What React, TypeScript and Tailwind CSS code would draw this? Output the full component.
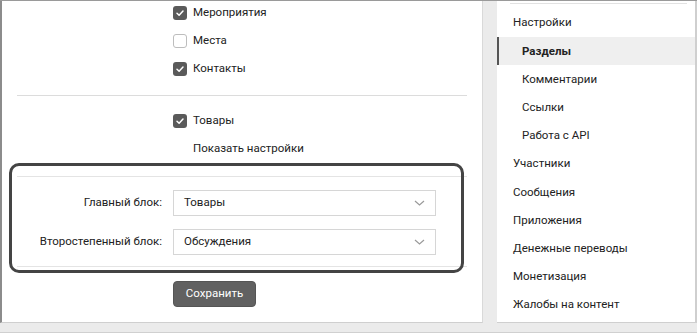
import React from "react";

function Check() {
  return (
    <svg width="10" height="10" viewBox="0 0 10 10" fill="none">
      <path d="M2 5.2L4.1 7.2L8 3" stroke="#fff" strokeWidth="1.5" strokeLinecap="round" strokeLinejoin="round" />
    </svg>
  );
}

function CheckRow({ label, checked }: { label: string; checked: boolean }) {
  return (
    <div className="h-[28px] flex items-center pl-[156px]">
      {checked ? (
        <span className="w-[14px] h-[14px] rounded-[3px] bg-[#5a5a5a] flex items-center justify-center">
          <Check />
        </span>
      ) : (
        <span className="w-[14px] h-[14px] rounded-[3px] border border-[#bdbdbd] bg-white" />
      )}
      <span className="ml-[6px] text-[11.5px] text-[#222]">{label}</span>
    </div>
  );
}

function Select({ value }: { value: string }) {
  return (
    <div className="w-[263px] h-[26px] border border-[#d6d6d6] bg-white flex items-center justify-between pl-[10px] pr-[10px]">
      <span className="text-[11.5px] text-[#222]">{value}</span>
      <svg width="11" height="6" viewBox="0 0 11 6" fill="none">
        <path d="M1 1L5.5 5L10 1" stroke="#9a9a9a" strokeWidth="1.2" />
      </svg>
    </div>
  );
}

const menu = [
  { label: "Настройки", sub: false },
  { label: "Разделы", sub: true, active: true },
  { label: "Комментарии", sub: true },
  { label: "Ссылки", sub: true },
  { label: "Работа с API", sub: true },
  { label: "Участники", sub: false },
  { label: "Сообщения", sub: false },
  { label: "Приложения", sub: false },
  { label: "Денежные переводы", sub: false },
  { label: "Монетизация", sub: false },
  { label: "Жалобы на контент", sub: false },
];

export default function App() {
  return (
    <div className="w-[697px] h-[333px] bg-[#ebebeb] flex flex-col overflow-hidden font-['Roboto',sans-serif] border-t border-[#9a9a9a]">
      <div className="flex h-[323px]">
        {/* left form */}
        <div className="w-[483px] bg-white border-l-2 border-[#8c8c8c] border-r border-r-[#d9d9d9] border-b border-b-[#cfcfcf] px-[15px]">
          <div className="-mt-[2px]">
            <CheckRow label="Мероприятия" checked />
            <CheckRow label="Места" checked={false} />
            <CheckRow label="Контакты" checked />
          </div>
          <div className="mt-[12px] h-px bg-[#dcdcdc]" />
          <div className="mt-[11px]">
            <CheckRow label="Товары" checked />
            <div className="h-[28px] flex items-center pl-[176px] text-[11.5px] text-[#222]">
              Показать настройки
            </div>
          </div>
          <div className="relative mt-[13px] border-t border-b border-[#e4e4e4] pt-[13px] pb-[11px] flex flex-col gap-[13px]">
            <div className="absolute -top-[14px] -left-[8px] w-[455px] h-[110px] rounded-[10px] border-[3px] border-[#444]" />
            <div className="flex items-center">
              <span className="w-[145px] text-right text-[11.5px] text-[#222]">Главный блок:</span>
              <div className="ml-[11px]">
                <Select value="Товары" />
              </div>
            </div>
            <div className="flex items-center">
              <span className="w-[145px] text-right text-[11.5px] text-[#222]">Второстепенный блок:</span>
              <div className="ml-[11px]">
                <Select value="Обсуждения" />
              </div>
            </div>
          </div>
          <div className="mt-[13px] pl-[156px]">
            <button className="w-[83px] h-[26px] rounded-[4px] bg-[#616161] border border-[#555] text-white text-[11.5px]">
              Сохранить
            </button>
          </div>
        </div>
        {/* gutter */}
        <div className="w-[14px]" />
        {/* right menu */}
        <div className="w-[198px] bg-white border-b border-[#cfcfcf] pt-[2px]">
          <div className="ml-[13px] mr-[8px] h-px bg-[#e2e2e2]" />
          <div className="pt-[5px] flex flex-col">
            {menu.map((m) => (
              <div
                key={m.label}
                className={
                  m.active
                    ? "h-[28.2px] flex items-center bg-[#efefef] border-l-2 border-[#555] pl-[23px] text-[11.5px] font-bold text-[#222]"
                    : m.sub
                    ? "h-[28.2px] flex items-center pl-[25px] text-[11.5px] text-[#222]"
                    : "h-[28.2px] flex items-center pl-[16px] text-[11.5px] text-[#222]"
                }
              >
                {m.label}
              </div>
            ))}
          </div>
        </div>
        <div className="w-[2px] bg-[#cfcfcf]" />
      </div>
      <div className="h-[10px] border-b border-[#d0d0d0]" />
    </div>
  );
}
